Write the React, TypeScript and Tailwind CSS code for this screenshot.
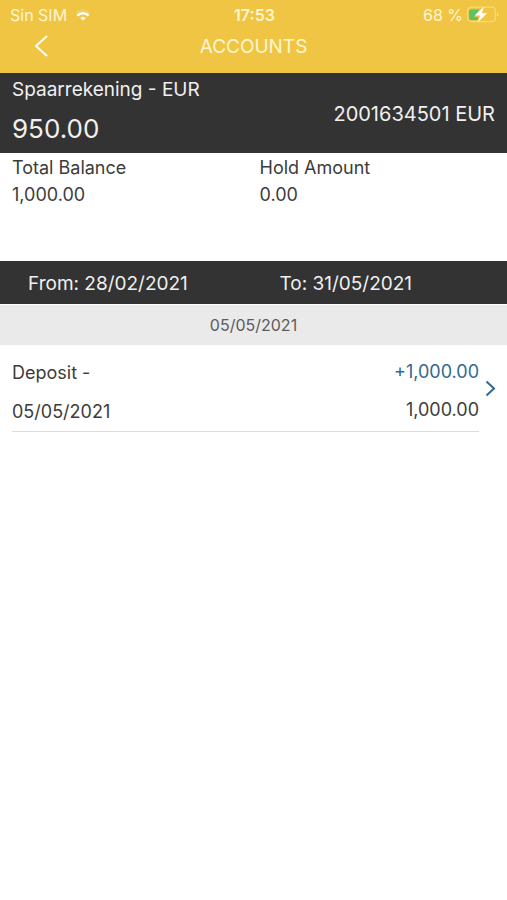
interface Transaction {
    title: string;
    date: string;
    amount: string;
    balance: string;
}

const transactions: Transaction[] = [
    { title: 'Deposit -', date: '05/05/2021', amount: '+1,000.00', balance: '1,000.00' },
];

const WifiIcon = () => (
    <svg viewBox="0 0 16 12" className="h-3 w-4" fill="none" stroke="#fff" aria-hidden="true">
        <path d="M1.2 4.2a9.8 9.8 0 0 1 13.6 0" strokeWidth="1.8" opacity="0.2" />
        <path d="M2.300 6.600a8.200 8.200 0 0 1 11.400 0" strokeWidth="2.600" />
        <path d="M8 11.8 5.3 9.1a3.8 3.8 0 0 1 5.4 0Z" fill="#fff" stroke="none" />
    </svg>
);

const BatteryIcon = () => (
    <svg viewBox="0 0 32 18" className="h-[18px] w-8" fill="none" aria-hidden="true">
        <rect x="0.7" y="1.2" width="27.6" height="14.4" rx="3.5" stroke="#fff3c4" strokeOpacity="0.45" strokeWidth="1.2" />
        <path d="M30 6.500v4c1-.3 1.600-1 1.600-2S31 6.800 30 6.500Z" fill="#fff3c4" fillOpacity="0.6" />
        <path d="M4 3.500h8.500L7.500 10v1h4l-1 3H4a2 2 0 0 1-2-2V5.500a2 2 0 0 1 2-2Z" fill="#5cc465" />
        <path d="M17.200.5 7.800 9.600h5.400L10.600 16.500l9.600-9.200h-5.400Z" fill="#fff" />
    </svg>
);

const StatusBar = () => (
    <div className="grid h-[30px] grid-cols-3 items-center pl-[10px] pr-2 text-[16px]">
        <div className="flex items-center gap-2">
            <span>Sin SIM</span>
            <WifiIcon />
        </div>
        <span className="text-center font-semibold">17:53</span>
        <div className="flex items-center justify-end gap-1">
            <span>68 %</span>
            <BatteryIcon />
        </div>
    </div>
);

const TitleBar = () => (
    <div className="grid grid-cols-3 items-center">
        <button type="button" aria-label="Back" className="ml-[34px] w-4">
            <svg viewBox="0 0 16 24" className="h-6 w-4" fill="none" stroke="#fff" strokeWidth="2">
                <path d="M13 1 2 11l11 10" />
            </svg>
        </button>
        <h1 className="text-center text-[19px] leading-[34px]">ACCOUNTS</h1>
    </div>
);

const AccountSummary = () => (
    <section className="flex h-20 items-center justify-between bg-[#333333] px-3 text-[#f0f0f0]">
        <div>
            <h2 className="text-[19px] leading-8">Spaarrekening - EUR</h2>
            <p className="text-[26px] leading-[46px]">950.00</p>
        </div>
        <p className="pt-[2px] text-[20px]">2001634501 EUR</p>
    </section>
);

const Balances = () => (
    <dl className="grid h-[108px] grid-cols-2 content-start gap-x-3 px-3 pt-px text-[18px] leading-[27px]">
        <div>
            <dt>Total Balance</dt>
            <dd>1,000.00</dd>
        </div>
        <div>
            <dt>Hold Amount</dt>
            <dd>0.00</dd>
        </div>
    </dl>
);

const DateRange = () => (
    <div className="grid h-[43px] grid-cols-2 items-center bg-[#333333] pt-1 text-[19px] text-[#f0f0f0]">
        <button type="button" className="pl-7 text-left">
            From: 28/02/2021
        </button>
        <button type="button" className="pl-[26px] text-left">
            To: 31/05/2021
        </button>
    </div>
);

const TransactionRow = ({ title, date, amount, balance }: Transaction) => (
    <a href="#transaction" className="flex items-center pl-3 pr-[10px]">
        <div className="flex flex-1 justify-between border-b border-[#dcdcdc] pt-2 text-[18px]">
            <div>
                <p className="leading-10">{title}</p>
                <p className="leading-[38px]">{date}</p>
            </div>
            <div className="text-right">
                <p className="leading-[38px] text-[#33688f]">{amount}</p>
                <p className="leading-[38px]">{balance}</p>
            </div>
        </div>
        <svg viewBox="0 0 12 18" className="ml-[6px] h-[18px] w-3" fill="none" stroke="#33688f" strokeWidth="2" aria-hidden="true">
            <path d="M1.500 1.500 9 8.500l-7.500 7" />
        </svg>
    </a>
);

export default function App() {
    return (
        <main className="min-h-screen bg-white font-['Inter',sans-serif] text-[#3c3c3c]">
            <header className="h-[73px] bg-[#efc543] text-[#fff6d0]">
                <StatusBar />
                <TitleBar />
            </header>
            <AccountSummary />
            <Balances />
            <DateRange />
            <h3 className="mt-px bg-[#eaeaea] text-center text-[16px] leading-10 text-[#5c5c5c]">05/05/2021</h3>
            {transactions.map((transaction) => (
                <TransactionRow key={transaction.date} {...transaction} />
            ))}
        </main>
    );
}
